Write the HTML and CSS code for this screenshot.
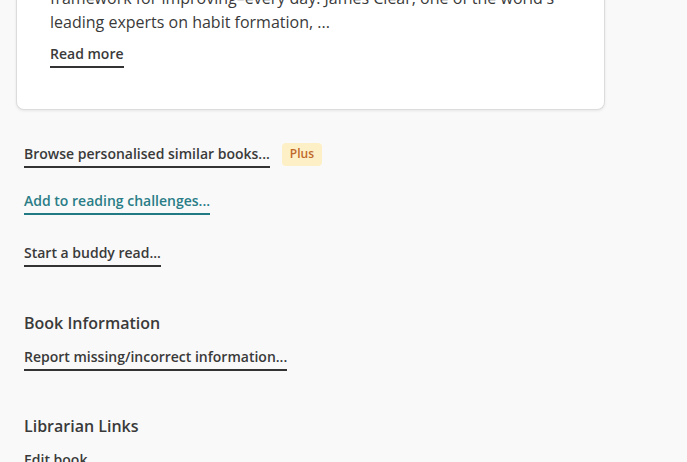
FILE: index.html
```html
<!DOCTYPE html>
<html lang="en">
<head>
    <meta charset="UTF-8">
    <meta name="viewport" content="width=device-width, initial-scale=1.0">
    <title>Atomic Habits</title>
    <link rel="stylesheet" href="styles.css">
</head>
<body>
    <div class="page">
        <div class="card">
            <p class="description">framework for improving–every day. James Clear, one of the world's leading experts on habit formation, ...</p>
            <a class="link read-more" href="#">Read more</a>
        </div>

        <div class="actions">
            <div class="action-row">
                <a class="link" href="#">Browse personalised similar books...</a>
                <span class="badge">Plus</span>
            </div>
            <div class="action-row">
                <a class="link teal" href="#">Add to reading challenges...</a>
            </div>
            <div class="action-row">
                <a class="link" href="#">Start a buddy read...</a>
            </div>
        </div>

        <div class="section">
            <h3>Book Information</h3>
            <a class="link" href="#">Report missing/incorrect information...</a>
        </div>

        <div class="section librarian">
            <h3>Librarian Links</h3>
            <a class="link" href="#">Edit book</a>
        </div>
    </div>
</body>
</html>
```

FILE: styles.css
```css
body {
    margin: 0;
    font-family: "Open Sans", "Noto Sans", Arial, sans-serif;
    background-color: #f9f9f9;
    color: #333;
    overflow: hidden;
}
.page {
    padding: 0 0 0 16px;
    width: 589px;
}
.card {
    margin-top: -40px;
    padding: 26px 32px 41px 33px;
    background: #fff;
    border: 1px solid #dcdcdc;
    border-top: none;
    border-radius: 0 0 8px 8px;
    box-shadow: 0 1px 3px rgba(0, 0, 0, 0.08);
}
.description {
    margin: 0 0 8px;
    font-size: 16px;
    line-height: 24px;
    color: #3a3a3a;
}
.link {
    display: inline-block;
    font-size: 14px;
    font-weight: 600;
    line-height: 20px;
    color: #3a3a3a;
    text-decoration: none;
    padding-bottom: 2px;
    border-bottom: 2px solid #333;
}
.link.teal {
    color: #2a7d87;
    border-bottom-color: #227a84;
}
.actions {
    padding: 34px 0 0 8px;
}
.action-row {
    display: flex;
    align-items: flex-start;
    gap: 12px;
    margin-bottom: 23px;
}
.action-row:nth-child(2) {
    margin-bottom: 28px;
}
.badge {
    font-size: 12px;
    font-weight: 600;
    line-height: 16px;
    color: #c0692a;
    background: #fdf0c6;
    border-radius: 4px;
    padding: 3px 8px 4px;
    margin-top: -1px;
}
.section {
    padding: 21px 0 0 8px;
}
.section h3 {
    margin: 0 0 10px;
    font-size: 16px;
    font-weight: 600;
    line-height: 24px;
    color: #3a3a3a;
}
.librarian {
    padding-top: 43px;
}
```
